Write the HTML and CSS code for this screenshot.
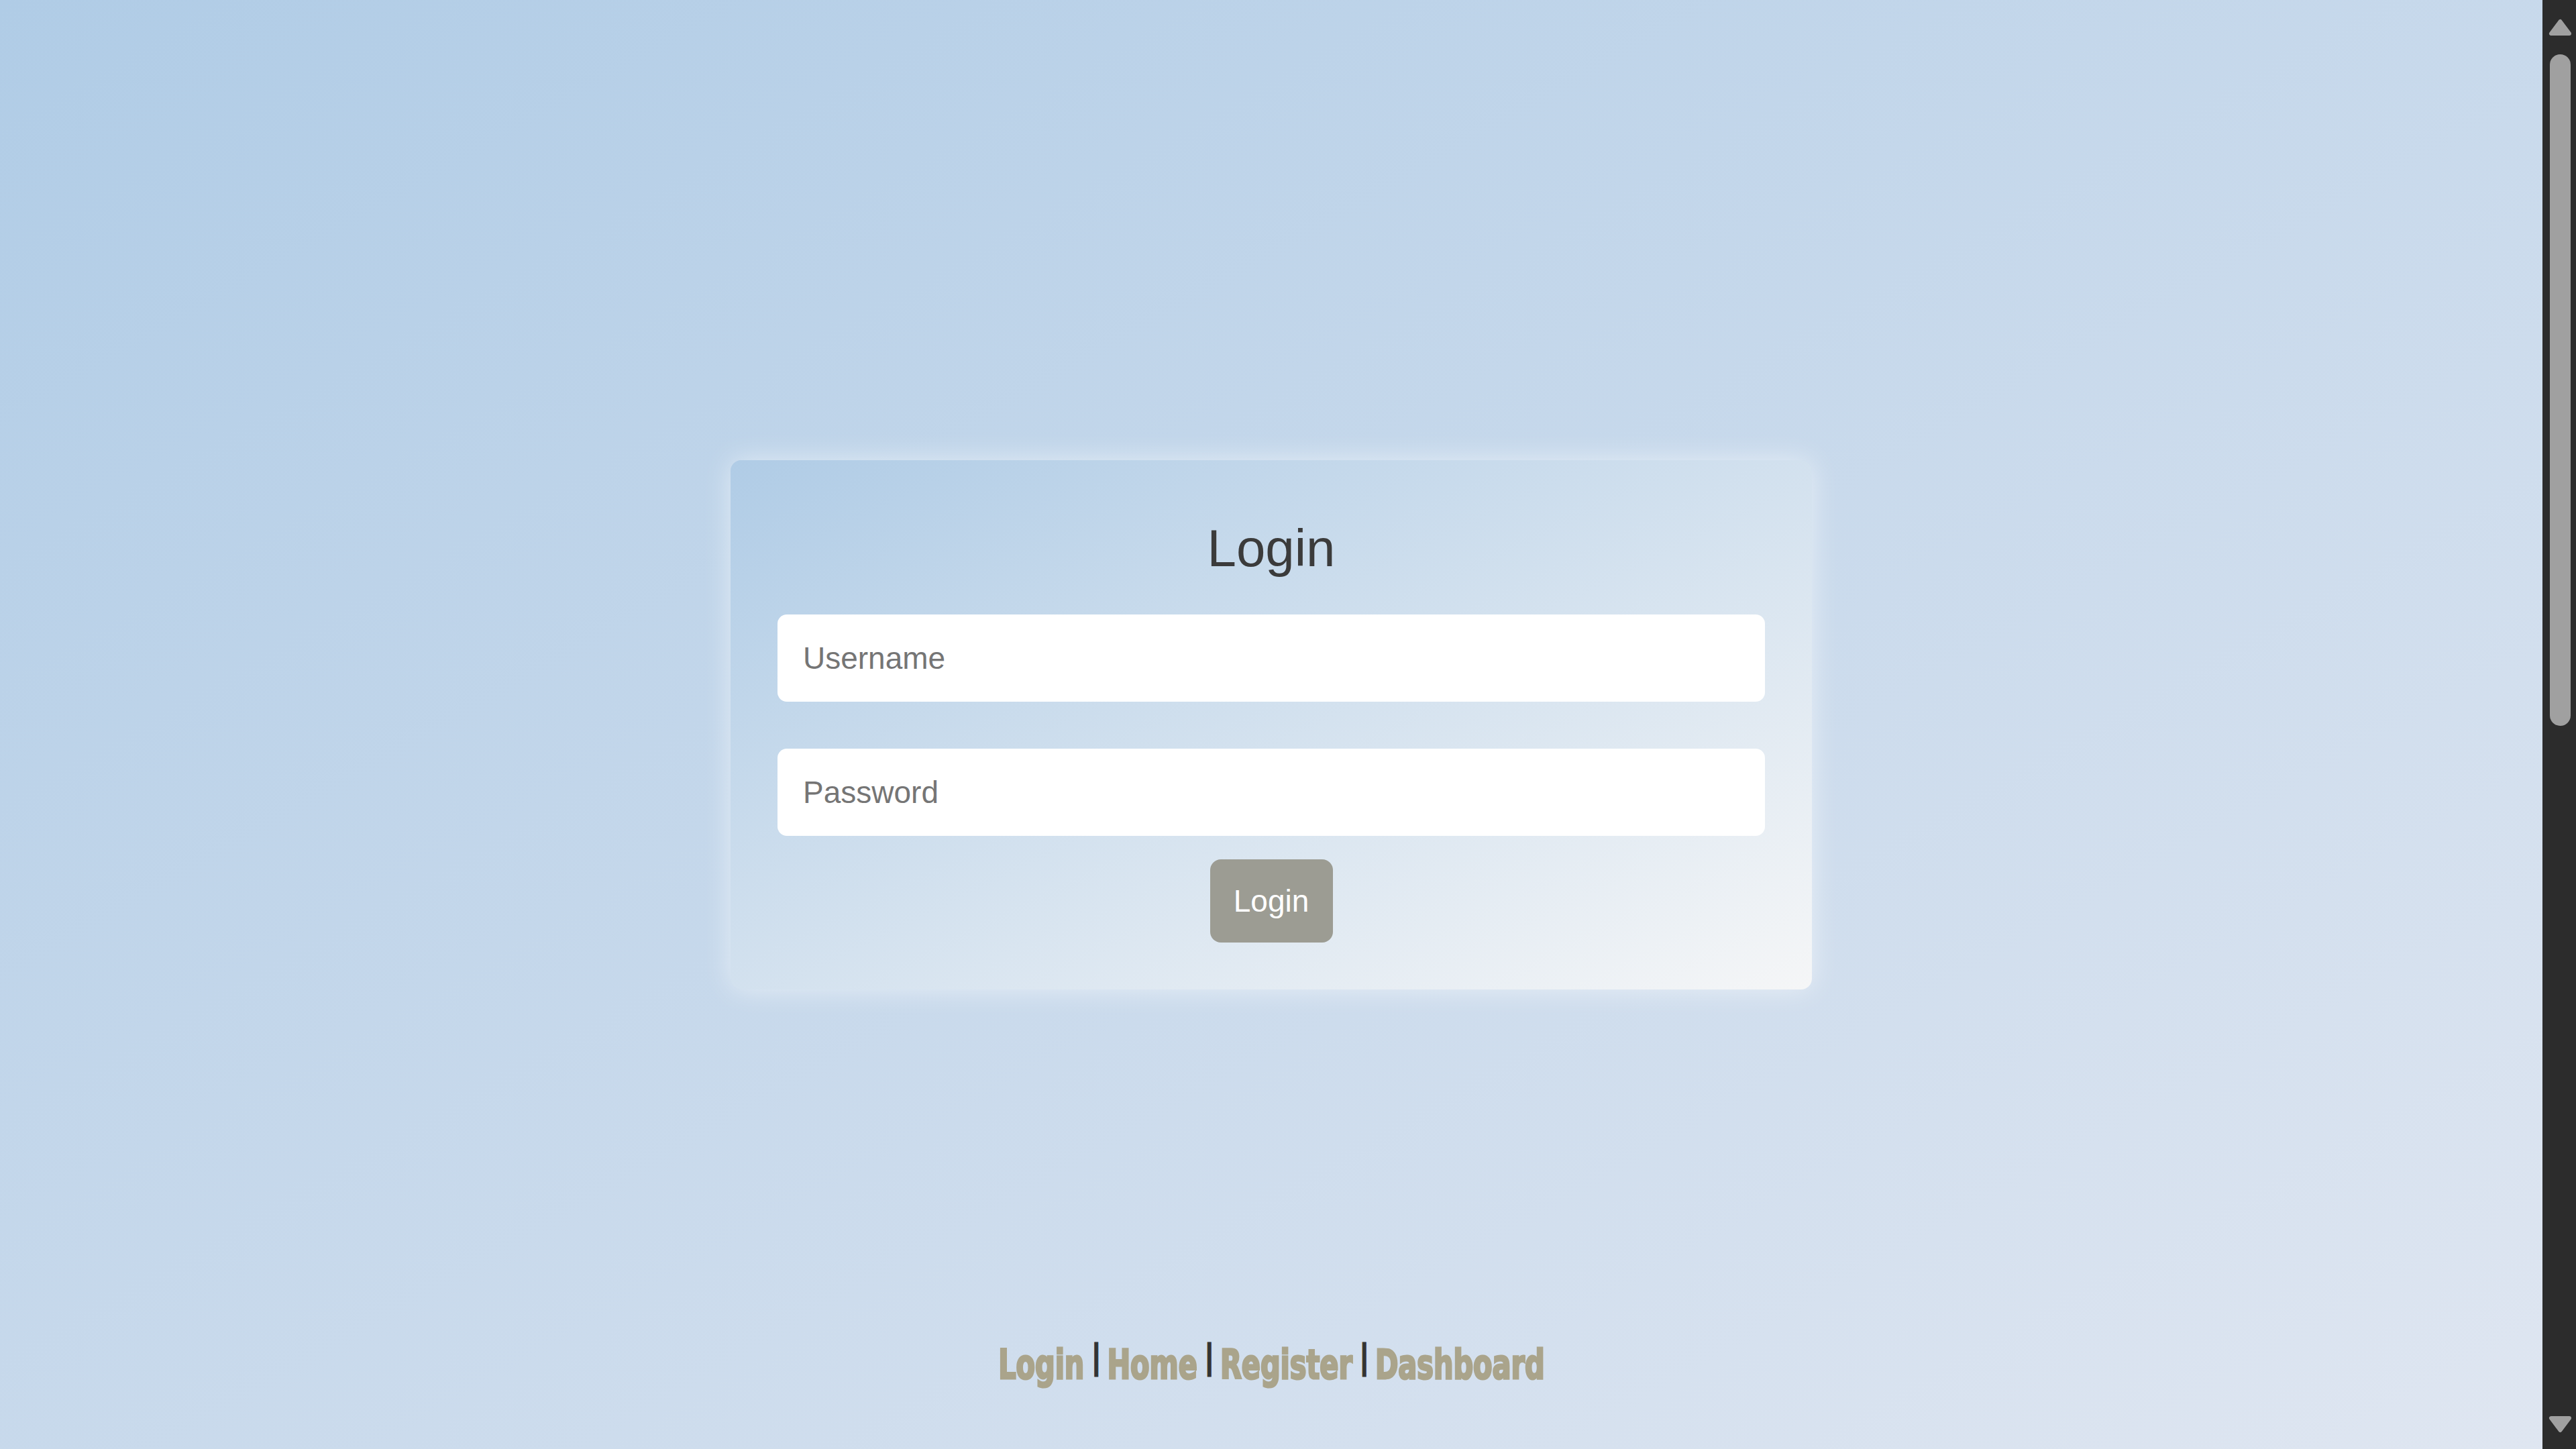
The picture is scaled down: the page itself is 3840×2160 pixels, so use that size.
FILE: index.html
```html
<!DOCTYPE html>
<html lang="en">
<head>
<meta charset="utf-8">
<title>Login</title>
<link rel="stylesheet" href="styles.css">
</head>
<body>
<div class="window">
  <main class="stage">
    <form class="card" action="#">
      <h1 class="title">Login</h1>
      <input class="field" type="text" placeholder="Username">
      <input class="field field-gap" type="password" placeholder="Password">
      <button class="btn" type="button">Login</button>
    </form>
    <nav class="links">
      <a class="link" href="#">Login</a><span class="sep">|</span><a class="link" href="#">Home</a><span class="sep">|</span><a class="link" href="#">Register</a><span class="sep">|</span><a class="link" href="#">Dashboard</a>
    </nav>
  </main>
  <aside class="scrollbar" aria-hidden="true">
    <div class="sb-btn">
      <svg width="50" height="80" viewBox="0 0 50 80"><polygon points="13,50 40,50 26.5,32" fill="#a0a0a0" stroke="#a0a0a0" stroke-width="6" stroke-linejoin="round"/></svg>
    </div>
    <div class="sb-track"><div class="sb-thumb"></div></div>
    <div class="sb-btn">
      <svg width="50" height="80" viewBox="0 0 50 80"><polygon points="13,34 40,34 26.5,52" fill="#a0a0a0" stroke="#a0a0a0" stroke-width="6" stroke-linejoin="round"/></svg>
    </div>
  </aside>
</div>
</body>
</html>
```

FILE: styles.css
```css
html, body {
  margin: 0;
  height: 100%;
  overflow: hidden;
}
body {
  font-family: "Liberation Sans", Arial, sans-serif;
}
.window {
  display: flex;
  height: 100vh;
}
.stage {
  flex: 1;
  height: 100vh;
  display: grid;
  grid-template-rows: 1fr auto 1fr;
  justify-items: center;
  background: linear-gradient(to bottom right, #b0cce6, #dfe6f1);
}
.card {
  grid-row: 2;
  box-sizing: border-box;
  width: 1612px;
  padding: 70px;
  display: flex;
  flex-direction: column;
  align-items: center;
  border-radius: 16px;
  background: linear-gradient(to bottom right, #b0cce6, #f5f6f7);
  box-shadow: 0 0 40px rgba(255, 255, 255, 0.55);
}
.title {
  margin: 15px 0 52px;
  font-size: 78px;
  line-height: 93px;
  font-weight: normal;
  color: #3b3b3b;
}
.field {
  box-sizing: border-box;
  width: 100%;
  height: 130px;
  padding: 0 38px;
  border: none;
  border-radius: 14px;
  background: #fff;
  font-family: "Liberation Sans", Arial, sans-serif;
  font-size: 46px;
  color: #333;
  outline: none;
}
.field::placeholder {
  color: #757575;
}
.field-gap {
  margin-top: 70px;
}
.btn {
  margin-top: 35px;
  box-sizing: border-box;
  width: 183px;
  height: 124px;
  border: none;
  border-radius: 16px;
  background: #9c9c93;
  color: #fff;
  font-family: "Liberation Sans", Arial, sans-serif;
  font-size: 46px;
  padding: 0;
}
.links {
  grid-row: 3;
  align-self: end;
  padding-bottom: 91px;
  white-space: nowrap;
  font-family: "Impact", "Liberation Sans Narrow", "DejaVu Sans Condensed", sans-serif;
  font-weight: bold;
  font-size: 61px;
  line-height: 70px;
  transform: scaleX(0.755);
}
.link {
  color: #aaa48b;
  text-decoration: none;
  -webkit-text-stroke: 3px #aaa48b;
}
.sep {
  margin: 0 14px 0 16px;
  font-family: "Liberation Sans", Arial, sans-serif;
  font-weight: bold;
  font-size: 54px;
  color: #333;
  -webkit-text-stroke: 1px #333;
  vertical-align: 15px;
}

.scrollbar {
  width: 50px;
  flex: none;
  height: 100vh;
  display: flex;
  flex-direction: column;
  background: #2c2c2c;
}
.sb-btn {
  height: 80px;
  flex: none;
}
.sb-btn svg {
  display: block;
}
.sb-track {
  flex: 1;
  padding: 1px 8px 0 11px;
}
.sb-thumb {
  height: 1001px;
  border-radius: 16px;
  background: #a0a0a0;
}
```
